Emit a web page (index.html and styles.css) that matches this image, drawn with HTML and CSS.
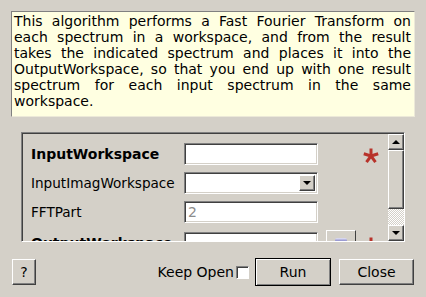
FILE: index.html
```html
<!DOCTYPE html>
<html lang="en">
<head>
    <meta charset="UTF-8">
    <title>FFT</title>
    <link rel="stylesheet" href="styles.css">
</head>
<body>
    <div class="desc">
        <div class="line">This algorithm performs a Fast Fourier Transform on</div>
        <div class="line">each spectrum in a workspace, and from the result</div>
        <div class="line">takes the indicated spectrum and places it into the</div>
        <div class="line">OutputWorkspace, so that you end up with one result</div>
        <div class="line">spectrum for each input spectrum in the same</div>
        <div class="line last">workspace.</div>
    </div>

    <div class="params">
        <div class="rows">
            <div class="row">
                <div class="label bold">InputWorkspace</div>
                <div class="field"></div>
                <div class="slot"></div>
                <svg class="star" viewBox="0 0 16 16"><g stroke="#b8322a" stroke-width="3"><line x1="8" y1="8" x2="8" y2="0.5"/><line x1="8" y1="8" x2="15.2" y2="5.7"/><line x1="8" y1="8" x2="12.5" y2="14.2"/><line x1="8" y1="8" x2="3.5" y2="14.2"/><line x1="8" y1="8" x2="0.8" y2="5.7"/></g></svg>
            </div>
            <div class="row">
                <div class="label">InputImagWorkspace</div>
                <div class="field combo"><span class="drop"><span class="tri"></span></span></div>
                <div class="slot"></div>
                <div class="slot"></div>
            </div>
            <div class="row">
                <div class="label">FFTPart</div>
                <div class="field"><span class="hint">2</span></div>
                <div class="slot"></div>
                <div class="slot"></div>
            </div>
            <div class="row tall">
                <div class="label bold">OutputWorkspace</div>
                <div class="field"></div>
                <div class="browse"><span class="pill"></span></div>
                <svg class="star" viewBox="0 0 16 16"><g stroke="#b8322a" stroke-width="3"><line x1="8" y1="8" x2="8" y2="0.5"/><line x1="8" y1="8" x2="15.2" y2="5.7"/><line x1="8" y1="8" x2="12.5" y2="14.2"/><line x1="8" y1="8" x2="3.5" y2="14.2"/><line x1="8" y1="8" x2="0.8" y2="5.7"/></g></svg>
            </div>
        </div>
        <div class="scrollbar">
            <div class="sb-btn"><span class="tri up"></span></div>
            <div class="sb-thumb"></div>
            <div class="sb-track"></div>
            <div class="sb-btn"><span class="tri"></span></div>
        </div>
    </div>

    <div class="footer">
        <div class="btn help">?</div>
        <div class="spacer"></div>
        <span class="keep">Keep Open</span>
        <span class="check"></span>
        <div class="btn run">Run</div>
        <div class="btn close">Close</div>
    </div>
</body>
</html>
```

FILE: styles.css
```css
body {
    margin: 0;
    width: 426px;
    height: 297px;
    overflow: hidden;
    background: #d4d0c8;
    font-family: "DejaVu Sans", sans-serif;
    font-size: 14px;
    color: #000;
}

/* description box */
.desc {
    margin: 11px 11px 0 11px;
    height: 103px;
    padding: 1px 3px 0 2px;
    background: #ffffe1;
    border-top: 1px solid #808080;
    border-left: 1px solid #808080;
    border-right: 1px solid #ece9d8;
    border-bottom: 1px solid #ece9d8;
    line-height: 16px;
}

.line {
    text-align: justify;
    text-align-last: justify;
    white-space: nowrap;
}

.line.last {
    text-align-last: left;
}

/* properties scroll area */
.params {
    margin: 15px 21px 0 21px;
    height: 107px;
    display: flex;
    border-top: 1px solid #808080;
    border-left: 1px solid #808080;
    border-right: 1px solid #fff;
    border-bottom: 1px solid #fff;
    box-shadow: inset 1px 1px 0 #404040;
    padding: 1px 0 0 1px;
}

.rows {
    flex: 1;
    overflow: hidden;
    display: flex;
    flex-direction: column;
    gap: 7px;
    padding: 9px 0 0 8px;
}

.row {
    display: grid;
    grid-template-columns: 153px 134px 38px 26px;
    align-items: center;
    height: 22px;
    flex-shrink: 0;
}

.row.tall {
    height: 26px;
}

.label {
    white-space: nowrap;
    line-height: 16px;
    font-size: 13.6px;
}

.bold {
    font-weight: bold;
    font-size: 14px;
}

.field {
    height: 22px;
    box-sizing: border-box;
    background: #fff;
    border-top: 1px solid #808080;
    border-left: 1px solid #808080;
    border-right: 1px solid #fff;
    border-bottom: 1px solid #fff;
    box-shadow: inset 1px 1px 0 #404040, inset -1px -1px 0 #d4d0c8;
    display: flex;
    align-items: center;
    padding-left: 3px;
}

.hint {
    color: #8c8c8c;
}

.combo {
    justify-content: flex-end;
    padding: 2px;
}

.drop {
    width: 16px;
    height: 16px;
    box-sizing: border-box;
    background: #d4d0c8;
    border-top: 1px solid #fff;
    border-left: 1px solid #fff;
    border-right: 1px solid #404040;
    border-bottom: 1px solid #404040;
    box-shadow: inset -1px -1px 0 #808080;
    display: flex;
    align-items: center;
    justify-content: center;
}

.tri {
    width: 0;
    height: 0;
    border-left: 4px solid transparent;
    border-right: 4px solid transparent;
    border-top: 4px solid #000;
}

.tri.up {
    border-top: none;
    border-bottom: 4px solid #000;
}

.star {
    width: 16px;
    height: 16px;
    margin: 4px 0 0 7px;
}

.browse {
    margin-left: 8px;
    width: 30px;
    height: 26px;
    box-sizing: border-box;
    border-top: 1px solid #fff;
    border-left: 1px solid #fff;
    border-right: 1px solid #404040;
    border-bottom: 1px solid #404040;
    display: flex;
    justify-content: center;
    padding-top: 7px;
}

.pill {
    width: 12px;
    height: 4px;
    border-radius: 2px;
    background: linear-gradient(#e6e6f6, #6d6dbd);
}

/* scrollbar */
.scrollbar {
    width: 16px;
    display: flex;
    flex-direction: column;
}

.sb-btn {
    height: 16px;
    box-sizing: border-box;
    border-top: 1px solid #fff;
    border-left: 1px solid #fff;
    border-right: 1px solid #404040;
    border-bottom: 1px solid #404040;
    box-shadow: inset -1px -1px 0 #808080;
    display: flex;
    align-items: center;
    justify-content: center;
}

.sb-thumb {
    height: 59px;
    box-sizing: border-box;
    border-top: 1px solid #fff;
    border-left: 1px solid #fff;
    border-right: 1px solid #404040;
    border-bottom: 1px solid #404040;
    box-shadow: inset -1px -1px 0 #808080;
}

.sb-track {
    flex: 1;
    background: repeating-conic-gradient(#fff 0 25%, #d4d0c8 0 50%) 0 0 / 2px 2px;
}

/* bottom buttons */
.footer {
    display: flex;
    align-items: center;
    margin: 16px 12px 0 12px;
    height: 28px;
}

.spacer {
    flex: 1;
}

.btn {
    height: 26px;
    box-sizing: border-box;
    border-top: 1px solid #fff;
    border-left: 1px solid #fff;
    border-right: 1px solid #404040;
    border-bottom: 1px solid #404040;
    box-shadow: inset -1px -1px 0 #808080;
    display: flex;
    align-items: center;
    justify-content: center;
}

.help {
    width: 24px;
}

.keep {
    margin-right: 2px;
}

.check {
    width: 13px;
    height: 13px;
    box-sizing: border-box;
    background: #fff;
    border-top: 1px solid #808080;
    border-left: 1px solid #808080;
    border-right: 1px solid #fff;
    border-bottom: 1px solid #fff;
    box-shadow: inset 1px 1px 0 #404040;
}

.run {
    width: 76px;
    height: 28px;
    margin-left: 6px;
    border: 1px solid #000;
    box-shadow: inset 1px 1px 0 #fff, inset -1px -1px 0 #808080;
}

.close {
    width: 75px;
    margin-left: 8px;
}
```
